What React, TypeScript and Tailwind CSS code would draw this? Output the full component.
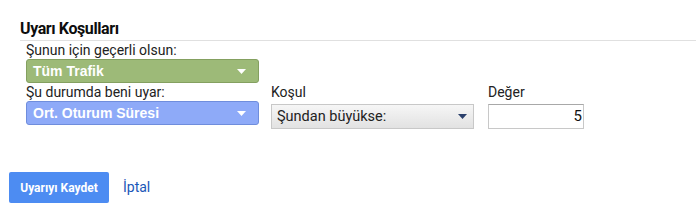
import { type ReactNode } from "react";

function Caret({ color }: { color: string }) {
	return (
		<svg width="9" height="5" viewBox="0 0 9 5" className="shrink-0">
			<path d="M0 0h9L4.5 5z" fill={color} />
		</svg>
	);
}

function ColorSelect({ label, bg, border }: { label: string; bg: string; border: string }) {
	return (
		<div
			className={`flex h-[24px] w-[233px] items-center justify-between rounded-[3px] border pl-[6px] pr-[12px] font-['Liberation_Sans',Arial,sans-serif] text-[14px] font-bold text-white ${bg} ${border}`}
		>
			<span>{label}</span>
			<Caret color="#ffffff" />
		</div>
	);
}

function Label({ children }: { children: ReactNode }) {
	return <div className="text-[14px] leading-[18px] text-[#222]">{children}</div>;
}

export default function App() {
	return (
		<div
			className="h-[221px] w-[696px] bg-white"
			style={{ fontFamily: "Roboto, 'Liberation Sans', sans-serif" }}
		>
			<div className="ml-[20px] border-b border-[#e0e0e0] pt-[19px] pb-[1px] text-[16px] font-bold leading-[20px] tracking-[-0.4px] text-[#0d0d0d]">
				Uyarı Koşulları
			</div>

			<div className="pl-[26px]">
				<Label>Şunun için geçerli olsun:</Label>
				<ColorSelect label="Tüm Trafik" bg="bg-[#9dba78]" border="border-[#84a060]" />

				<div className="flex">
					<div className="w-[245px]">
						<Label>Şu durumda beni uyar:</Label>
						<ColorSelect
							label="Ort. Oturum Süresi"
							bg="bg-[#8eaaf8]"
							border="border-[#6f8ddc]"
						/>
					</div>
					<div className="w-[217px]">
						<Label>Koşul</Label>
						<div className="mt-[3px] flex h-[25px] w-[203px] items-center justify-between border border-[#c8c8c8] bg-gradient-to-b from-[#f6f6f6] to-[#e2e2e2] pl-[5px] pr-[6px] text-[14.5px] text-[#222]">
							<span>Şundan büyükse:</span>
							<Caret color="#2a3f6b" />
						</div>
					</div>
					<div>
						<Label>Değer</Label>
						<div className="mt-[3px] flex h-[25px] w-[96px] items-center justify-end border border-[#c8c8c8] border-t-[#a8a8a8] pr-[1px] text-[15px] text-[#111]">
							5
						</div>
					</div>
				</div>
			</div>

			<div className="mt-[43px] flex items-center pl-[9px]">
				<button className="h-[31px] w-[100px] rounded-[2px] bg-[#4d8cf2] text-[12px] font-bold text-white">
					Uyarıyı Kaydet
				</button>
				<span className="ml-[14px] text-[14px] text-[#1a57b8]">İptal</span>
			</div>
		</div>
	);
}
